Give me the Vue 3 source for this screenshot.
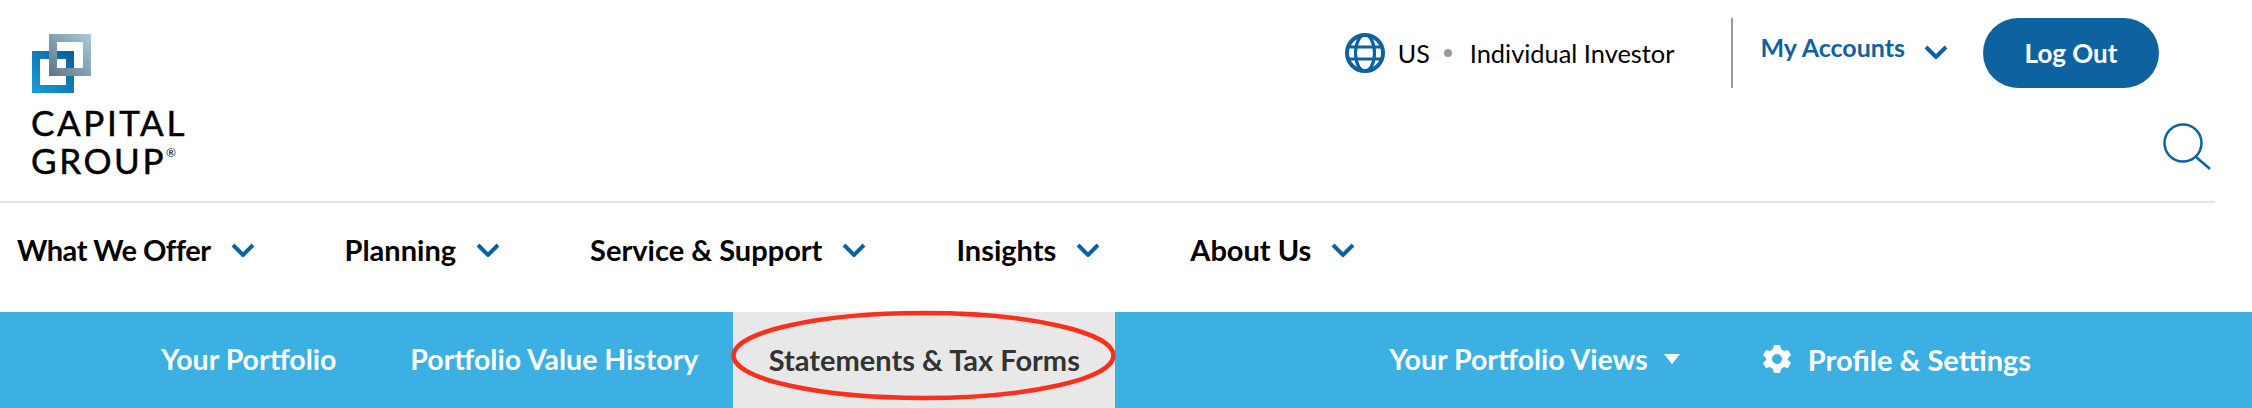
<template>
  <div class="page">
    <header class="top">
      <a class="logo">
        <svg class="logo-mark" width="60" height="60" viewBox="0 0 60 60">
          <defs>
            <linearGradient id="blueSq" x1="1" y1="0" x2="0" y2="1">
              <stop offset="0" stop-color="#0b5c99" />
              <stop offset="1" stop-color="#1b9dd9" />
            </linearGradient>
            <linearGradient id="graySq" x1="1" y1="0" x2="0" y2="1">
              <stop offset="0" stop-color="#a9cbdb" />
              <stop offset="1" stop-color="#5f7484" />
            </linearGradient>
          </defs>
          <path fill="url(#blueSq)" fill-rule="evenodd" d="M0 17h42v42H0zM8 25v26h26V25z" />
          <path fill="url(#graySq)" fill-rule="evenodd" d="M17 0h42v42H17zM25 8v26h26V8z" />
        </svg>
        <span class="logo-text">CAPITAL<br />GROUP<sup>®</sup></span>
      </a>
      <div class="top-right">
        <div class="util">
          <svg class="globe" width="40" height="40" viewBox="0 0 40 40">
            <g fill="none" stroke="#0f62a0">
              <circle cx="20" cy="20" r="18" stroke-width="4" />
              <ellipse cx="20" cy="20" rx="9.5" ry="18" stroke-width="3.2" />
              <path d="M3 14h34M3 26h34" stroke-width="3.2" />
            </g>
          </svg>
          <span class="region">US</span>
          <i class="dot"></i>
          <span class="investor">Individual Investor</span>
          <i class="sep"></i>
          <a class="accounts">My Accounts</a>
          <svg class="chev acc-chev" width="24" height="14" viewBox="0 0 24 14">
            <path d="M2 2l10 10L22 2" />
          </svg>
          <button class="logout">Log Out</button>
        </div>
        <svg class="search" width="48" height="47" viewBox="0 0 48 47">
          <circle cx="20" cy="20" r="18.5" fill="none" stroke="#0f62a0" stroke-width="2.5" />
          <path d="M33 34l14 12" fill="none" stroke="#0f62a0" stroke-width="2.5" />
        </svg>
      </div>
    </header>

    <nav class="main-nav">
      <a v-for="item in navItems" :key="item" class="nav-item">
        {{ item }}
        <svg class="chev" width="24" height="14" viewBox="0 0 24 14">
          <path d="M2 2l10 10L22 2" />
        </svg>
      </a>
    </nav>

    <div class="sub-nav">
      <a class="sub-link first">Your Portfolio</a>
      <a class="sub-link second">Portfolio Value History</a>
      <a class="sub-tab">
        Statements &amp; Tax Forms
        <svg class="ring" width="387" height="93" viewBox="0 0 387 93">
          <ellipse cx="193.5" cy="46.5" rx="190" ry="42.5" fill="none" stroke="#f9311c" stroke-width="4.5" />
        </svg>
      </a>
      <a class="sub-link views">
        Your Portfolio Views
        <i class="caret"></i>
      </a>
      <a class="sub-link settings">
        <svg class="gear" width="30" height="30" viewBox="0 0 30 30">
          <path
            fill="#fff"
            fill-rule="evenodd"
            d="M12 1h6l1 4 3 2 4-1 3 5-3 3v2l3 3-3 5-4-1-3 2-1 4h-6l-1-4-3-2-4 1-3-5 3-3v-2L1 11l3-5 4 1 3-2zM15 10a5 5 0 1 0 0 10 5 5 0 0 0 0-10z"
          />
        </svg>
        Profile &amp; Settings
      </a>
    </div>
  </div>
</template>

<script setup>
const navItems = ['What We Offer', 'Planning', 'Service & Support', 'Insights', 'About Us']
</script>

<style>
html,
body {
  margin: 0;
  background: #fff;
}
</style>

<style scoped>
.page {
  width: 2252px;
  height: 408px;
  overflow: hidden;
  font-family: Lato, "Open Sans", sans-serif;
  color: #000;
}

.top {
  width: 2215px;
  height: 201px;
  display: flex;
  justify-content: space-between;
  border-bottom: 2px solid #e2e2e2;
}

.logo {
  display: block;
  padding: 34px 0 0 31px;
}

.logo-mark {
  display: block;
  margin-left: 1px;
}

.logo-text {
  display: block;
  margin-top: 9px;
  font-size: 35px;
  line-height: 38px;
  letter-spacing: 2.6px;
  -webkit-text-stroke: 0.5px #000;
}

.logo-text sup {
  font-size: 12px;
  line-height: 0;
  vertical-align: 17px;
  letter-spacing: 0;
  -webkit-text-stroke: 0;
}

.top-right {
  display: flex;
  flex-direction: column;
  align-items: flex-end;
}

.util {
  display: flex;
  align-items: center;
  margin: 18px 56px 0 0;
  height: 70px;
}

.region {
  margin-left: 13px;
  font-size: 25px;
}

.dot {
  width: 8px;
  height: 8px;
  margin: 0 18px 0 14px;
  border-radius: 50%;
  background: #999;
}

.investor {
  font-size: 25.4px;
}

.sep {
  width: 2px;
  height: 70px;
  margin: 0 27px 0 57px;
  background: #999;
}

.accounts {
  font-size: 25px;
  font-weight: 700;
  color: #0f62a0;
  margin-top: -12px;
}

.acc-chev {
  margin: -2px 35px 0 19px;
}

.chev path {
  fill: none;
  stroke: #0f62a0;
  stroke-width: 4;
}

.logout {
  width: 176px;
  height: 70px;
  border: 0;
  border-radius: 35px;
  background: #0f62a0;
  color: #fff;
  font-family: inherit;
  font-size: 26px;
  font-weight: 700;
}

.search {
  margin: 35px 4px 0 0;
}

.main-nav {
  box-sizing: border-box;
  height: 109px;
  display: flex;
  align-items: center;
  gap: 90px;
  padding: 0 0 16px 17px;
}

.nav-item {
  display: flex;
  align-items: center;
  gap: 20px;
  font-size: 29px;
  font-weight: 700;
  white-space: nowrap;
}

.nav-item:first-child {
  letter-spacing: -0.5px;
}

.sub-nav {
  height: 96px;
  display: flex;
  align-items: center;
  background: #3cafe3;
  color: #fff;
  font-size: 28.5px;
  font-weight: 700;
  white-space: nowrap;
}

.sub-link {
  margin-bottom: 2px;
}

.first {
  margin-left: 161px;
}

.second {
  margin-left: 74px;
}

.sub-tab {
  position: relative;
  box-sizing: border-box;
  width: 382px;
  height: 96px;
  padding-bottom: 2px;
  margin-left: 35px;
  display: flex;
  align-items: center;
  justify-content: center;
  background: #e8e8e8;
  color: #333;
  font-size: 29px;
}

.ring {
  position: absolute;
  left: -3px;
  top: -3px;
}

.views {
  display: flex;
  align-items: center;
  margin-left: 274px;
}

.caret {
  margin-left: 16px;
  border-left: 8px solid transparent;
  border-right: 8px solid transparent;
  border-top: 10px solid #fff;
}

.settings {
  display: flex;
  align-items: center;
  gap: 16px;
  margin-left: 82px;
  font-size: 29px;
}
</style>
